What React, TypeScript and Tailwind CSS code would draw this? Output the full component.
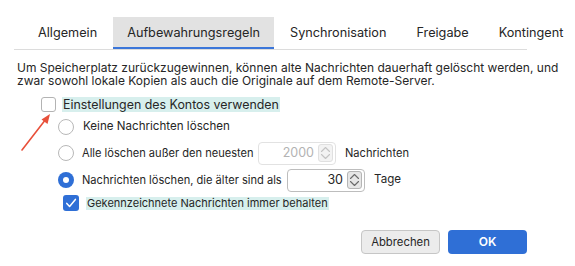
import React from "react";

const font = { fontFamily: "Inter, 'Noto Sans', 'Liberation Sans', sans-serif" };

function Radio({ checked }: { checked?: boolean }) {
  if (checked) {
    return (
      <span className="flex h-[16px] w-[16px] shrink-0 items-center justify-center rounded-full bg-[#2f6fd6]">
        <span className="h-[6px] w-[6px] rounded-full bg-white" />
      </span>
    );
  }
  return <span className="h-[16px] w-[16px] shrink-0 rounded-full border border-[#b8b8b8] bg-white" />;
}

function Stepper({ disabled }: { disabled?: boolean }) {
  const c = disabled ? "#c4c4c4" : "#6a6a6a";
  return (
    <span
      className={`flex h-[18px] w-[15px] flex-col items-center justify-center rounded-[3px] border ${
        disabled ? "border-[#e0e0e0] bg-[#f3f3f3]" : "border-[#b5b5b5] bg-[#e6e6e6]"
      }`}
    >
      <svg width="11" height="14" viewBox="0 0 11 14" fill="none">
        <path d="M1.5 5.5 L5.5 1.5 L9.5 5.5" stroke={c} strokeWidth="1.1" strokeLinecap="round" strokeLinejoin="round" />
        <path d="M1.5 8.5 L5.5 12.5 L9.5 8.5" stroke={c} strokeWidth="1.1" strokeLinecap="round" strokeLinejoin="round" />
      </svg>
    </span>
  );
}

function NumberInput({ value, disabled }: { value: string; disabled?: boolean }) {
  return (
    <div
      className={`flex h-[23px] w-[78px] shrink-0 items-center justify-end gap-[4px] rounded-[4px] border bg-white pr-[2px] ${
        disabled ? "border-[#e2e2e2]" : "border-[#bdbdbd]"
      }`}
    >
      <span className={`text-[12.5px] ${disabled ? "text-[#b3b3b3]" : "text-[#262626]"}`}>{value}</span>
      <Stepper disabled={disabled} />
    </div>
  );
}

export default function App() {
  const tabs = ["Allgemein", "Aufbewahrungsregeln", "Synchronisation", "Freigabe", "Kontingent"];
  return (
    <div className="relative h-[266px] w-[575px] overflow-hidden bg-white text-[#262626]" style={font}>
      {/* Tabs */}
      <div className="ml-[14px] mt-[17px] w-[513px] border-b border-[#dcdcdc]">
        <div className="ml-[10px] flex h-[32px] items-stretch gap-[2px] whitespace-nowrap">
          {tabs.map((t, i) => (
            <div
              key={t}
              className={`flex items-center px-[14px] text-[12.7px] ${
                i === 1 ? "border-b-[2px] border-[#3b76d9] bg-[#e2e2e2] pt-[2px]" : ""
              }`}
            >
              {t}
            </div>
          ))}
        </div>
      </div>

      {/* Description */}
      <p className="ml-[17px] mt-[11px] w-[550px] text-[12px] leading-[13px] text-[#262626]">
        Um Speicherplatz zurückzugewinnen, können alte Nachrichten dauerhaft gelöscht werden, und zwar sowohl lokale Kopien als auch die Originale auf dem Remote-Server.
      </p>

      {/* Options */}
      <div className="mt-[6px] flex flex-col whitespace-nowrap text-[11.6px]">
        <div className="ml-[41px] flex h-[22px] items-center gap-[6px]">
          <span className="h-[15px] w-[15px] rounded-[3px] border border-[#b3b3b3] bg-white" />
          <span className="bg-[#d7efed] px-[1px] text-[12.4px] leading-[15px]">Einstellungen des Kontos verwenden</span>
        </div>
        <div className="ml-[58px] flex h-[23px] items-center gap-[9px]">
          <Radio />
          <span>Keine Nachrichten löschen</span>
        </div>
        <div className="ml-[58px] mt-[3px] flex h-[24px] items-center">
          <Radio />
          <span className="ml-[8px] w-[176px] text-[11.1px]">Alle löschen außer den neuesten</span>
          <NumberInput value="2000" disabled />
          <span className="ml-[9px] text-[11.1px]">Nachrichten</span>
        </div>
        <div className="ml-[58px] mt-[3px] flex h-[24px] items-center">
          <Radio checked />
          <span className="ml-[8px] w-[205px] text-[11.1px]">Nachrichten löschen, die älter sind als</span>
          <NumberInput value="30" />
          <span className="ml-[9px]">Tage</span>
        </div>
        <div className="ml-[63px] flex h-[22px] items-center gap-[7px]">
          <span className="flex h-[16px] w-[16px] items-center justify-center rounded-[3px] bg-[#2f6fd6]">
            <svg width="12" height="12" viewBox="0 0 12 12" fill="none">
              <path d="M1.8 6.4 L4.6 9.4 L10.4 2.4" stroke="white" strokeWidth="1.5" strokeLinecap="round" strokeLinejoin="round" />
            </svg>
          </span>
          <span className="bg-[#d7efed] px-[1px] text-[11px] leading-[13px]">Gekennzeichnete Nachrichten immer behalten</span>
        </div>
      </div>

      {/* Buttons */}
      <div className="mr-[48px] mt-[16px] flex justify-end gap-[8px]">
        <button className="h-[24px] w-[79px] rounded-[4px] border border-[#c6c6c6] bg-[#ececec] text-[11.3px] text-[#262626]">
          Abbrechen
        </button>
        <button className="h-[24px] w-[79px] rounded-[4px] bg-[#2f6fd6] text-[12px] font-semibold text-white">
          OK
        </button>
      </div>

      {/* Red arrow annotation */}
      <svg className="absolute left-0 top-0" width="575" height="266" viewBox="0 0 575 266" fill="none">
        <line x1="22" y1="150" x2="46" y2="119" stroke="#e8503a" strokeWidth="1.6" strokeLinecap="round" />
        <path d="M50 114 L41.5 119.5 L47.5 124 Z" fill="#e8503a" />
      </svg>
    </div>
  );
}
